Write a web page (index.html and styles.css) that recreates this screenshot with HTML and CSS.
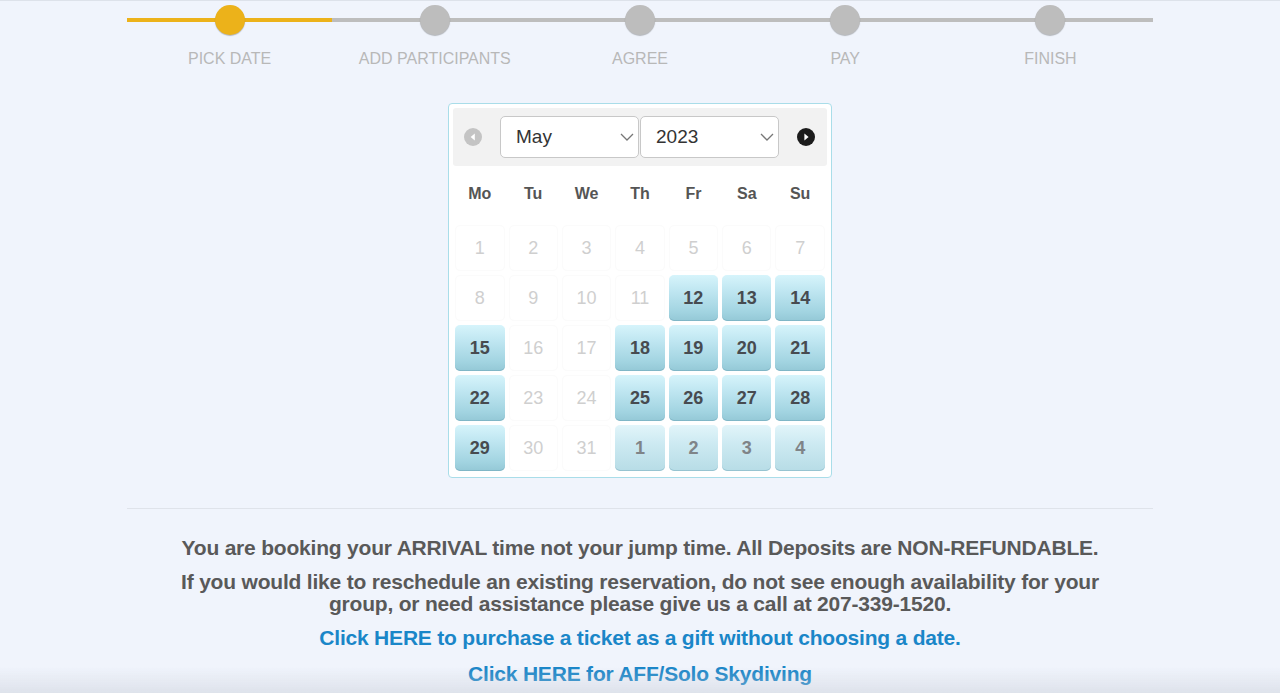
FILE: index.html
```html
<!DOCTYPE html>
<html lang="en">
<head>
    <meta charset="UTF-8">
    <meta name="viewport" content="width=device-width, initial-scale=1.0">
    <title>Pick Date</title>
    <link rel="stylesheet" href="styles.css">
</head>
<body>
    <div class="page">
        <div class="steps">
            <div class="step done active">
                <div class="dot"></div>
                <div class="label">PICK DATE</div>
            </div>
            <div class="step">
                <div class="dot"></div>
                <div class="label">ADD PARTICIPANTS</div>
            </div>
            <div class="step">
                <div class="dot"></div>
                <div class="label">AGREE</div>
            </div>
            <div class="step">
                <div class="dot"></div>
                <div class="label">PAY</div>
            </div>
            <div class="step">
                <div class="dot"></div>
                <div class="label">FINISH</div>
            </div>
        </div>

        <div class="calendar">
            <div class="cal-header">
                <span class="nav prev">
                    <svg width="18" height="18" viewBox="0 0 18 18"><circle cx="9" cy="9" r="9" fill="#c4c4c4"/><path d="M10.8 5.6 L6.6 9 L10.8 12.4 Z" fill="#fff"/></svg>
                </span>
                <div class="select">
                    <span>May</span>
                    <svg width="14" height="8" viewBox="0 0 14 8"><path d="M1 1 L7 7 L13 1" fill="none" stroke="#777" stroke-width="1.3"/></svg>
                </div>
                <div class="select">
                    <span>2023</span>
                    <svg width="14" height="8" viewBox="0 0 14 8"><path d="M1 1 L7 7 L13 1" fill="none" stroke="#777" stroke-width="1.3"/></svg>
                </div>
                <span class="nav next">
                    <svg width="18" height="18" viewBox="0 0 18 18"><circle cx="9" cy="9" r="9" fill="#1c1c1c"/><path d="M7.4 5.6 L11.6 9 L7.4 12.4 Z" fill="#fff"/></svg>
                </span>
            </div>
            <div class="days">
                <div class="dow">Mo</div><div class="dow">Tu</div><div class="dow">We</div><div class="dow">Th</div><div class="dow">Fr</div><div class="dow">Sa</div><div class="dow">Su</div>
            </div>
            <div class="grid" id="grid"></div>
        </div>

        <hr class="divider">

        <div class="notes">
            <p>You are booking your ARRIVAL time not your jump time. All Deposits are NON-REFUNDABLE.</p>
            <p>If you would like to reschedule an existing reservation, do not see enough availability for your group, or need assistance please give us a call at 207-339-1520.</p>
            <p><a href="#">Click HERE to purchase a ticket as a gift without choosing a date.</a></p>
            <p><a href="#">Click HERE for AFF/Solo Skydiving</a></p>
        </div>
    </div>
    <div class="bottom-fade"></div>

    <script>
        const open = [12, 13, 14, 15, 18, 19, 20, 21, 22, 25, 26, 27, 28, 29];
        const grid = document.getElementById('grid');

        for (let d = 1; d <= 31; d++) {
            const cell = document.createElement('div');
            cell.className = open.includes(d) ? 'day open' : 'day off';
            cell.textContent = d;
            grid.appendChild(cell);
        }
        for (let d = 1; d <= 4; d++) {
            const cell = document.createElement('div');
            cell.className = 'day open other';
            cell.textContent = d;
            grid.appendChild(cell);
        }
    </script>
</body>
</html>
```

FILE: styles.css
```css
html, body {
    margin: 0;
    padding: 0;
}
body {
    font-family: "Liberation Sans", Arial, sans-serif;
    background-color: #f0f4fc;
    border-top: 1px solid #dde2ea;
}
.page {
    width: 1026px;
    margin: 0 auto;
}
.steps {
    display: grid;
    grid-template-columns: repeat(5, 1fr);
    padding-top: 4px;
}
.step {
    position: relative;
    display: flex;
    flex-direction: column;
    align-items: center;
}
.step::before {
    content: "";
    position: absolute;
    top: 13px;
    left: 0;
    right: 0;
    height: 4px;
    background: #bdbdbd;
}
.step.done::before {
    background: #ecb21a;
}
.dot {
    position: relative;
    width: 30px;
    height: 30px;
    border-radius: 50%;
    background: #bdbdbd;
    box-shadow: 0 1px 1px rgba(0, 0, 0, 0.25);
}
.step.active .dot {
    background: #ecb21a;
}
.label {
    margin-top: 15px;
    font-size: 16px;
    color: #b8b8b8;
}

.calendar {
    width: 374px;
    margin: 35px auto 0;
    padding: 4px 4px 6px;
    background: #fff;
    border: 1px solid #a9dde9;
    border-radius: 4px;
}
.cal-header {
    display: flex;
    align-items: center;
    height: 58px;
    background: #f2f2f2;
    border-radius: 3px;
}
.nav {
    display: flex;
    flex: none;
    justify-content: center;
}
.nav.prev {
    width: 40px;
    margin-right: 7px;
}
.nav.next {
    width: 42px;
    margin-left: 5px;
}
.select {
    display: flex;
    flex: none;
    align-items: center;
    justify-content: space-between;
    box-sizing: border-box;
    width: 139px;
    height: 42px;
    padding: 0 4px 0 15px;
    margin-right: 1px;
    background: #fff;
    border: 1px solid #c8c8c8;
    border-radius: 5px;
    font-size: 19px;
    color: #333;
}
.days {
    display: grid;
    grid-template-columns: repeat(7, 49.4px);
    justify-content: center;
    column-gap: 4px;
    height: 56px;
    align-items: center;
}
.dow {
    text-align: center;
    font-weight: bold;
    font-size: 16px;
    color: #555;
}
.grid {
    display: grid;
    grid-template-columns: repeat(7, 49.4px);
    justify-content: center;
    grid-auto-rows: 46px;
    gap: 4px;
    padding-top: 3px;
}
.day {
    display: flex;
    align-items: center;
    justify-content: center;
    font-size: 18px;
    border-radius: 5px;
}
.day.off {
    color: #cfcfcf;
    border: 1px solid #fbfbfb;
}
.day.open {
    font-weight: bold;
    color: #474b50;
    background: linear-gradient(to bottom, #d6f4fb 0%, #bfe6f1 35%, #a2d4e1 80%, #94c8d6 100%);
    box-shadow: inset 0 -1px 0 rgba(90, 150, 170, 0.35);
}
.day.other {
    color: #7f8488;
    background: linear-gradient(to bottom, #e2f5fa 0%, #cdeaf2 40%, #b7dce6 100%);
}

.divider {
    border: none;
    border-top: 1px solid #dfe3ea;
    margin: 30px 0 0;
}
.notes {
    text-align: center;
    padding: 0 50px;
}
.notes p {
    margin: 0;
    font-size: 21px;
    font-weight: bold;
    color: #595959;
    line-height: 22px;
    letter-spacing: -0.2px;
}
.notes p:first-child {
    margin-top: 28px;
}
.notes p + p {
    margin-top: 12px;
}
.notes p:last-child {
    margin-top: 14px;
}
.notes a {
    color: #1a86c8;
    text-decoration: none;
}
.bottom-fade {
    position: fixed;
    left: 0;
    right: 0;
    bottom: 0;
    height: 26px;
    background: linear-gradient(to bottom, rgba(200, 205, 215, 0), rgba(200, 205, 215, 0.45));
    pointer-events: none;
}
```
